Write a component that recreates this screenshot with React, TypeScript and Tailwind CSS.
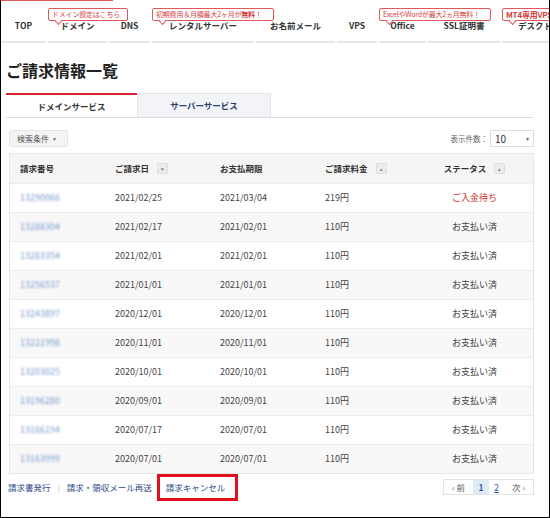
import React from 'react';

const navItems = [
  { label: 'TOP', w: 'w-[45px]' },
  { label: 'ドメイン', w: 'w-[59px]', tip: 'ドメイン設定はこちら', tipW: 'w-[80px]' },
  { label: 'DNS', w: 'w-[41px]' },
  { label: 'レンタルサーバー', w: 'w-[102px]', tip: 'rental', tipW: 'w-[122px]' },
  { label: 'お名前メール', w: 'w-[79px]' },
  { label: 'VPS', w: 'w-[40px]' },
  { label: 'Office', w: 'w-[47px]', tip: 'ExcelやWordが最大2ヵ月無料！', tipW: 'w-[112px]' },
  { label: 'SSL証明書', w: 'w-[72px]' },
  { label: 'デスクトップ', w: 'w-[80px]', tip: 'mt4', tipW: 'w-[70px]' },
];

const rows = [
  { no: '13290066', date: '2021/02/25', due: '2021/03/04', fee: '219円', status: 'ご入金待ち' },
  { no: '13288304', date: '2021/02/17', due: '2021/02/01', fee: '110円', status: 'お支払い済' },
  { no: '13283354', date: '2021/02/01', due: '2021/02/01', fee: '110円', status: 'お支払い済' },
  { no: '13256537', date: '2021/01/01', due: '2021/01/01', fee: '110円', status: 'お支払い済' },
  { no: '13243897', date: '2020/12/01', due: '2020/12/01', fee: '110円', status: 'お支払い済' },
  { no: '13221998', date: '2020/11/01', due: '2020/11/01', fee: '110円', status: 'お支払い済' },
  { no: '13203025', date: '2020/10/01', due: '2020/10/01', fee: '110円', status: 'お支払い済' },
  { no: '13196280', date: '2020/09/01', due: '2020/09/01', fee: '110円', status: 'お支払い済' },
  { no: '13166194', date: '2020/07/17', due: '2020/07/01', fee: '110円', status: 'お支払い済' },
  { no: '13163999', date: '2020/07/01', due: '2020/07/01', fee: '110円', status: 'お支払い済' },
];

const Tip = ({ children, w }: { children: React.ReactNode; w: string }) => (
  <div className={`absolute left-0 top-[7px] ${w} h-[13px] border border-[#e0585b] rounded-[2px] bg-white flex items-center px-[3px] text-[7px] font-normal leading-none tracking-[-0.2px] text-[#d43f3f] whitespace-nowrap`}>
    {children}
    <span className="absolute left-[7px] -bottom-[4px] w-[5px] h-[5px] bg-white border-r border-b border-[#e0585b] rotate-45" />
  </div>
);

const SortBtn = ({ up }: { up?: boolean }) => (
  <span className="inline-flex items-center justify-center w-[11px] h-[11px] ml-[8px] bg-[#ececec] border border-[#e0e0e0] rounded-[1px] text-[5px] text-[#888] leading-none">
    {up ? '▴' : '▾'}
  </span>
);

export default function App() {
  return (
    <div className="w-[550px] h-[518px] bg-white border-l border-r border-b border-black overflow-hidden [font-family:'Noto_Sans_CJK_JP','Noto_Sans',sans-serif] text-[#333]">
      <div className="h-[1px] w-[112px] bg-[#e05a5a]" />

      {/* global nav */}
      <div className="flex gap-[2px] h-[42px] whitespace-nowrap">
        {navItems.map((item) => (
          <div
            key={item.label}
            className={`relative ${item.w} shrink-0 flex items-end justify-center pb-[9px] border-b-2 border-[#e6e6e6] text-[8.5px] font-bold text-[#333]`}
          >
            {item.tip === 'rental' && (
              <Tip w={item.tipW!}>
                初期費用＆月額最大2ヶ月が<b className="font-bold">無料</b>！
              </Tip>
            )}
            {item.tip === 'mt4' && (
              <Tip w={item.tipW!}>
                <b className="font-bold text-[8px]">MT4専用VPS</b>
              </Tip>
            )}
            {item.tip && item.tip !== 'rental' && item.tip !== 'mt4' && (
              <Tip w={item.tipW!}>{item.tip}</Tip>
            )}
            <span className={item.label === 'デスクトップ' ? 'pl-[16px] self-end w-full' : ''}>{item.label}</span>
          </div>
        ))}
      </div>

      <h1 className="mt-[17px] ml-[5px] text-[16px] leading-[20px] font-bold text-[#222]">ご請求情報一覧</h1>

      {/* tabs */}
      <div className="mt-[13px] ml-[5px] w-[527px] flex border-b border-[#dcdcdc] h-[25px]">
        <div className="w-[131px] border-t-2 border-[#d8232a] bg-white flex items-center justify-center text-[8.5px] font-bold text-[#333]">
          ドメインサービス
        </div>
        <div className="w-[134px] bg-[#f2f4f8] border border-b-0 border-[#e1e4ea] flex items-center justify-center text-[8.5px] font-bold text-[#2a3f6d]">
          サーバーサービス
        </div>
      </div>

      {/* toolbar */}
      <div className="mt-[12px] ml-[8px] w-[525px] flex items-center justify-between h-[17px]">
        <div className="h-[17px] w-[59px] bg-[#f4f4f4] border border-[#e6e6e6] rounded-[2px] flex items-center pl-[7px] text-[8px] text-[#555]">
          検索条件<span className="ml-[4px] text-[6px] text-[#777]">▾</span>
        </div>
        <div className="flex items-center">
          <span className="text-[7.5px] text-[#666] mr-[2px]">表示件数：</span>
          <div className="w-[44px] h-[17px] border border-[#dcdcdc] bg-white flex items-center justify-between px-[4px]">
            <span className="text-[10px] text-[#333]">10</span>
            <span className="text-[6px] text-[#666]">▾</span>
          </div>
        </div>
      </div>

      {/* table */}
      <div className="mt-[6px] ml-[8px] w-[525px] border border-[#e6e6e6]">
        <div className="grid grid-cols-[95px_105px_105px_105px_1fr] h-[29px] bg-[#f5f5f5] items-center text-[8.5px] font-bold text-[#333]">
          <div className="pl-[10px]">請求番号</div>
          <div className="pl-[10px] flex items-center">ご請求日<SortBtn /></div>
          <div className="pl-[10px]">お支払期限</div>
          <div className="pl-[10px] flex items-center">ご請求料金<SortBtn up /></div>
          <div className="flex items-center justify-center pr-[4px]">ステータス<SortBtn up /></div>
        </div>
        {rows.map((r, i) => (
          <div
            key={r.no}
            className={`grid grid-cols-[95px_105px_105px_105px_1fr] h-[29px] items-center text-[9px] text-[#444] border-t border-[#ececec] ${i % 2 === 1 ? 'bg-[#f8f8f8]' : 'bg-white'}`}
          >
            <div className="pl-[10px] text-[#7c9ad0] blur-[1.2px]">{r.no}</div>
            <div className="pl-[10px]">{r.date}</div>
            <div className="pl-[10px]">{r.due}</div>
            <div className="pl-[10px]">{r.fee}</div>
            <div className={`text-center pr-[4px] ${r.status === 'ご入金待ち' ? 'text-[#c9302c]' : 'text-[#444]'}`}>{r.status}</div>
          </div>
        ))}
      </div>

      {/* footer */}
      <div className="ml-[7px] w-[526px] flex items-start justify-between">
        <div className="flex items-center text-[8.5px] text-[#2d4a86] h-[27px]">
          <span>請求書発行</span>
          <span className="mx-[7px] text-[#ccc]">|</span>
          <span>請求・領収メール再送</span>
          <span className="ml-[5px] h-[27px] w-[81px] border-[3px] border-[#e0101e] flex items-center pl-[6px]">請求キャンセル</span>
        </div>
        <div className="mt-[5px] flex h-[16px] border border-[#e2e2e2] text-[8.5px] text-[#2d5aa8]">
          <span className="w-[29px] flex items-center justify-center text-[#555]">‹ 前</span>
          <span className="w-[16px] flex items-center justify-center bg-[#dfeaf7] font-bold">1</span>
          <span className="w-[15px] flex items-center justify-center underline">2</span>
          <span className="w-[29px] flex items-center justify-center text-[#555]">次 ›</span>
        </div>
      </div>
    </div>
  );
}
